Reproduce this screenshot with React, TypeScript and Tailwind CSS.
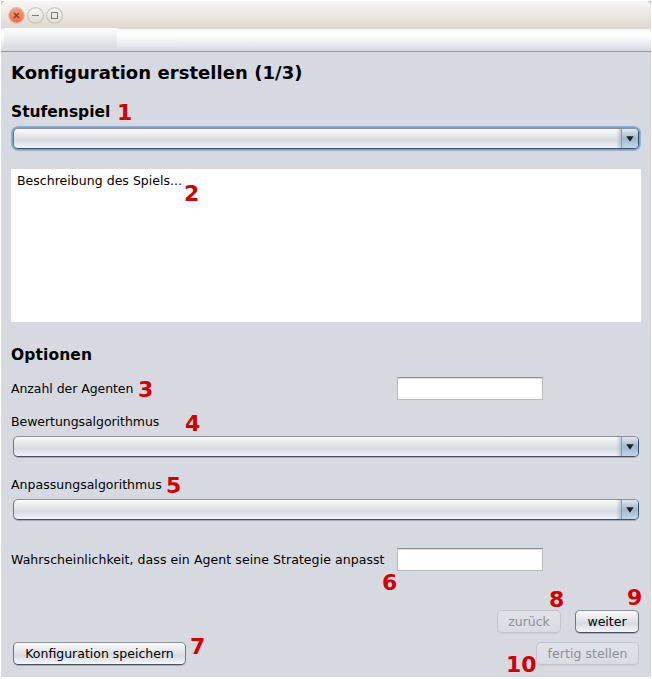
import type { ReactNode } from "react";

function Mark({ n, className }: { n: number; className: string }) {
  return (
    <span className={`absolute text-[22px] leading-[22px] font-bold text-[#d40000] ${className}`}>{n}</span>
  );
}

function Combo({ focused = false }: { focused?: boolean }) {
  return (
    <div
      className={`mb-px ml-[2px] flex h-[21px] w-[626px] shrink-0 overflow-hidden rounded-[5px] border border-t-[#8d9099] border-r-[#33506b] border-b-[#4a4e5a] border-l-[#6f737d] bg-linear-to-b from-[#fafafc] via-[#d8dbe0] via-60% to-[#eff3fd] ${
        focused ? "shadow-[0_0_0_1.5px_#73a4d1,0_0_1px_2px_#a9c1dc]" : "shadow-[0_1px_0_#a9adb6]"
      }`}
    >
      <div className="grow" />
      <div className="w-[5px] bg-linear-to-r from-transparent to-[#8aa0b480]" />
      <div className="flex w-[17px] items-center justify-center border-l border-[#7f9db8] bg-linear-to-b from-[#dfe8f0] via-[#a2b8cd] via-50% to-[#bfd6ed]">
        <svg width="8" height="6" viewBox="0 0 8 6">
          <path d="M0.3 0.3H7.7L4 5.7Z" fill="#1c1f22" />
        </svg>
      </div>
    </div>
  );
}

function Field() {
  return (
    <div className="absolute left-[386px] top-0 h-[23px] w-[146px] border border-t-[#8d8e92] border-r-[#b9bbbe] border-b-[#b9bbbe] border-l-[#b9bbbe] bg-white shadow-[inset_0_1px_0_#dcdcdd]" />
  );
}

function Button({ children, className, disabled = false }: { children: ReactNode; className: string; disabled?: boolean }) {
  return (
    <button
      disabled={disabled}
      className={`flex h-[23px] items-center justify-center rounded-[5px] border pt-[2px] whitespace-nowrap ${
        disabled
          ? "border-[#c2c5cc] bg-linear-to-b from-[#e0e3e8] to-[#d8dbe2] text-[#8e8f91] shadow-[0_1px_0_#c8cbd2]"
          : "border-t-[#8d9099] border-r-[#6f737d] border-b-[#4a4e5a] border-l-[#6f737d] bg-linear-to-b from-[#fafafc] via-[#d8dbe0] via-60% to-[#f3f6fd] shadow-[0_1px_0_#a9adb6]"
      } ${className}`}
    >
      {children}
    </button>
  );
}

function TitleBar() {
  return (
    <div className="shrink-0 bg-[#c4c4c2]">
      <div className="flex h-[28px] items-center rounded-t-[5px] bg-linear-to-b from-[#f8f7f4] to-[#dfd6cf] pl-[7px]">
        <svg width="56" height="18" viewBox="0 0 56 18">
          <defs>
            <linearGradient id="grey" x1="0" y1="0" x2="0" y2="1">
              <stop offset="0" stopColor="#f8f7f5" />
              <stop offset="1" stopColor="#e0dcd6" />
            </linearGradient>
            <linearGradient id="orange" x1="0" y1="0" x2="0" y2="1">
              <stop offset="0" stopColor="#f79a78" />
              <stop offset="1" stopColor="#ee6c3d" />
            </linearGradient>
          </defs>
          <circle cx="8.5" cy="9.5" r="7.8" fill="url(#orange)" stroke="#cfc5be" strokeWidth="1.2" />
          <circle cx="27.5" cy="9.5" r="7.8" fill="url(#grey)" stroke="#c5bfb8" strokeWidth="1.1" />
          <circle cx="46.5" cy="9.5" r="7.8" fill="url(#grey)" stroke="#c5bfb8" strokeWidth="1.1" />
          <path d="M6 7L11 12M11 7L6 12" stroke="#7b3f29" strokeWidth="1.4" />
          <path d="M24 9.5H31" stroke="#827c70" strokeWidth="1.1" />
          <rect x="43.5" y="6.5" width="6" height="6" fill="none" stroke="#827c70" />
        </svg>
      </div>
    </div>
  );
}

export default function App() {
  return (
    <div className="h-[679px] w-[652px] bg-white pt-px pl-px font-['DejaVu_Sans',sans-serif] text-[12.5px] text-black">
      <div className="relative flex h-[676px] w-[650px] flex-col bg-[#d6d9e0]">
        <TitleBar />
        <div className="flex h-[22px] shrink-0 bg-linear-to-b from-[#f7fafb] via-[#fdfefe] via-30% to-[#d6d9e0]">
          <div className="-mt-px ml-[3px] h-[20px] w-[113px] bg-linear-to-b from-[#fafcfc] via-[#f6f8f9] via-20% to-[#d7dae1]" />
          <div className="h-[18px] w-[60px] bg-linear-to-b from-[#f8fafb] via-[#fdfefe] via-30% to-[#e3e6eb]" />
        </div>
        <div className="h-px shrink-0 bg-[#9297a1]" />
        <main className="flex flex-col pl-[10px]">
          <h1 className="h-[42px] text-[18px] leading-[42px] font-bold tracking-[0.05px]">Konfiguration erstellen (1/3)</h1>
          <h2 className="h-[34px] text-[15.5px] leading-[36px] font-bold">Stufenspiel</h2>
          <Combo focused />
          <div className="mt-[19px] h-[153px] w-[630px] bg-white pt-[2px] pl-[6px] leading-[20px] tracking-[0.03px]">Beschreibung des Spiels...</div>
          <h2 className="mt-[16px] h-[34px] text-[15.5px] leading-[34px] font-bold tracking-[0.1px]">Optionen</h2>
          <div className="relative mt-[5px] h-[23px] leading-[24px] tracking-[-0.06px]">
            Anzahl der Agenten
            <Field />
          </div>
          <div className="mt-[12px] mb-[4px] h-[20px] leading-[20px] tracking-[-0.05px]">Bewertungsalgorithmus</div>
          <Combo />
          <div className="mt-[17px] mb-[4px] h-[20px] leading-[20px] tracking-[0.03px]">Anpassungsalgorithmus</div>
          <Combo />
          <div className="relative mt-[27px] h-[23px] leading-[24px] tracking-[0.07px]">
            Wahrscheinlichkeit, dass ein Agent seine Strategie anpasst
            <Field />
          </div>
          <div className="mt-[39px] flex justify-end gap-[14px] pr-[12px]">
            <Button disabled className="w-[64px]">zurück</Button>
            <Button className="w-[64px]">weiter</Button>
          </div>
          <div className="mt-[9px] flex justify-between pr-[12px] pl-[2px]">
            <Button className="w-[173px]">Konfiguration speichern</Button>
            <Button disabled className="w-[103px] tracking-[0.05px]">fertig stellen</Button>
          </div>
        </main>
        <Mark n={1} className="left-[116px] top-[101px]" />
        <Mark n={2} className="left-[183px] top-[182px]" />
        <Mark n={3} className="left-[137px] top-[378px]" />
        <Mark n={4} className="left-[184px] top-[412px]" />
        <Mark n={5} className="left-[165px] top-[474px]" />
        <Mark n={6} className="left-[381px] top-[571px]" />
        <Mark n={7} className="left-[189px] top-[635px]" />
        <Mark n={8} className="left-[548px] top-[588px]" />
        <Mark n={9} className="left-[626px] top-[586px]" />
        <Mark n={10} className="left-[505px] top-[653px]" />
      </div>
    </div>
  );
}
